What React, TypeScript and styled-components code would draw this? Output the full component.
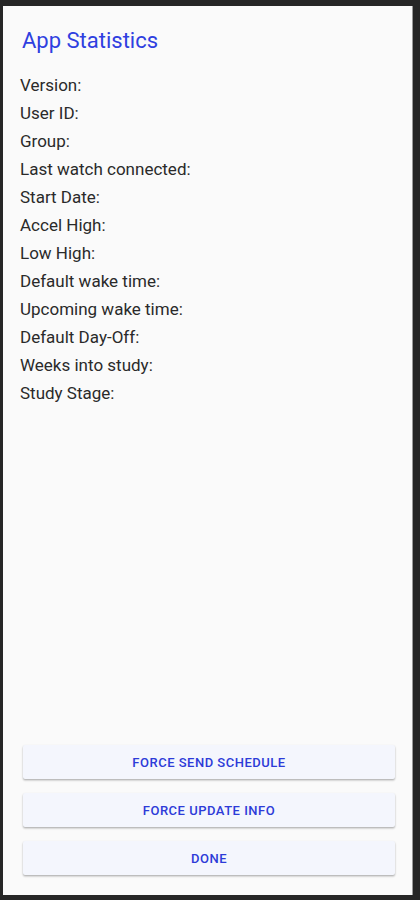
import React from "react";
import styled, { createGlobalStyle } from "styled-components";

const Global = createGlobalStyle`
  html, body { margin: 0; padding: 0; background: #262626; }
  * { box-sizing: border-box; }
`;

const Frame = styled.div`
  width: 420px;
  height: 900px;
  background: #262626;
  padding: 6px 7px 5px 3px;
  display: flex;
`;

const Panel = styled.div`
  flex: 1;
  background: #fafafa;
  border-right: 1px solid #9a9a9a;
  display: flex;
  flex-direction: column;
  font-family: Roboto, "Noto Sans", sans-serif;
`;

const Header = styled.h1`
  margin: 23px 0 0 19px;
  font-size: 22px;
  line-height: 24px;
  font-weight: 400;
  color: #2f3fe0;
`;

const List = styled.div`
  margin: 18px 0 0 17px;
  display: flex;
  flex-direction: column;
`;

const Row = styled.div`
  font-size: 17px;
  line-height: 28px;
  color: #2a2a2a;
`;

const Actions = styled.div`
  margin-top: auto;
  padding: 0 17px 20px 20px;
  display: flex;
  flex-direction: column;
  gap: 14px;
`;

const Button = styled.button`
  height: 34px;
  border: none;
  border-radius: 2px;
  background: #f4f6fd;
  box-shadow: 0 1px 2px rgba(0, 0, 0, 0.25), 0 2px 2px rgba(0, 0, 0, 0.08);
  color: #2d3bd8;
  font-family: Roboto, "Noto Sans", sans-serif;
  font-weight: 500;
  font-size: 13px;
  letter-spacing: 0.5px;
  text-transform: uppercase;
  cursor: pointer;
`;

const labels = [
  "Version:",
  "User ID:",
  "Group:",
  "Last watch connected:",
  "Start Date:",
  "Accel High:",
  "Low High:",
  "Default wake time:",
  "Upcoming wake time:",
  "Default Day-Off:",
  "Weeks into study:",
  "Study Stage:",
];

export default function App() {
  return (
    <>
      <Global />
      <Frame>
        <Panel>
          <Header>App Statistics</Header>
          <List>
            {labels.map((l) => (
              <Row key={l}>{l}</Row>
            ))}
          </List>
          <Actions>
            <Button>Force Send Schedule</Button>
            <Button>Force Update Info</Button>
            <Button>Done</Button>
          </Actions>
        </Panel>
      </Frame>
    </>
  );
}
